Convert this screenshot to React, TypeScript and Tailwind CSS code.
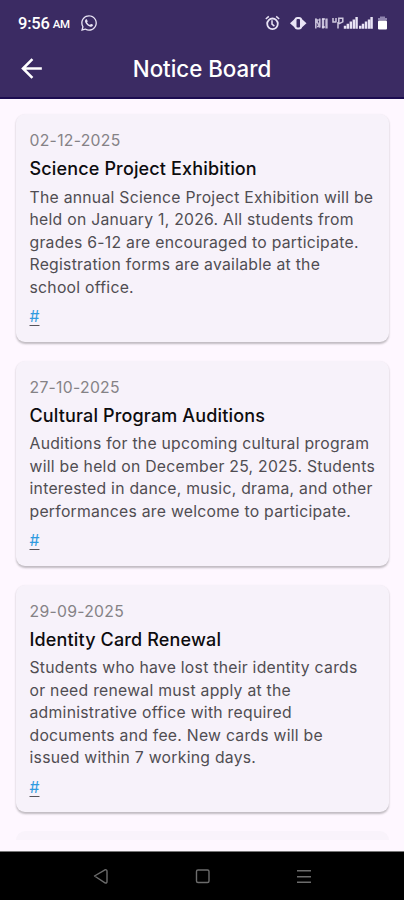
import { FaWhatsapp } from 'react-icons/fa';

interface Notice {
  date: string;
  title: string;
  lines: string[];
}

const NOTICES: Notice[] = [
  {
    date: '02-12-2025',
    title: 'Science Project Exhibition',
    lines: [
      'The annual Science Project Exhibition will be',
      'held on January 1, 2026. All students from',
      'grades 6-12 are encouraged to participate.',
      'Registration forms are available at the',
      'school office.',
    ],
  },
  {
    date: '27-10-2025',
    title: 'Cultural Program Auditions',
    lines: [
      'Auditions for the upcoming cultural program',
      'will be held on December 25, 2025. Students',
      'interested in dance, music, drama, and other',
      'performances are welcome to participate.',
    ],
  },
  {
    date: '29-09-2025',
    title: 'Identity Card Renewal',
    lines: [
      'Students who have lost their identity cards',
      'or need renewal must apply at the',
      'administrative office with required',
      'documents and fee. New cards will be',
      'issued within 7 working days.',
    ],
  },
];

function StatusIcons() {
  return (
    <svg width="126" height="20" viewBox="0 0 126 20" fill="none" stroke="#e9e4f5">
      {/* alarm */}
      <circle cx="8.5" cy="10.8" r="5.3" strokeWidth="1.8" />
      <path d="M8 7.3v3.8l2.4 2M1.8 6l3-2.6M15.2 6l-3-2.6" strokeWidth="1.5" />
      {/* vibrate */}
      <path d="M26 10.3l5.5-5v10zM42.5 10.3l-5.5-5v10z" fill="#e9e4f5" stroke="none" />
      <rect x="31.5" y="5" width="5.5" height="10.5" rx="2" strokeWidth="2" />
      {/* VoLTE */}
      <path d="M51.8 15.5V5.5l4 9V5.5M51.8 7h3M53 13.5h3M58 6h3M58 14h3" strokeWidth="1.6" opacity=".8" />
      <path d="M59 5.5v10M62.5 5.5v10" strokeWidth="2.3" opacity=".8" />
      {/* network */}
      <path d="M69 5v4h3.5M72 5v4M74.8 5.3h4v3.5l-4 2zM74 9v6.5" strokeWidth="1.5" opacity=".85" />
      <path d="M81 15.8v-3M83.8 15.8v-5M86.8 15.8V8.5M89.8 15.8V6.5M92.6 15.8V4M96.2 15.8v-3M99 15.8v-5M102 15.8V8.5M105 15.8V6.5M107.6 15.8V4" strokeWidth="2.4" />
      {/* battery */}
      <path d="M114 7V5h2V3.5h5V5h2v2z" fill="#8f84ae" stroke="none" />
      <rect x="114" y="7.5" width="9" height="9" rx="1" fill="#fff" stroke="none" />
    </svg>
  );
}

function NoticeCard({ notice }: { notice: Notice }) {
  return (
    <article className="shrink-0 rounded-[9px] bg-[#f7f2fa] px-3.5 pt-[17px] pb-3.5 shadow-[0_1.5px_2px_rgba(0,0,0,0.2),0_2px_3px_rgba(0,0,0,0.06)]">
      <p className="h-5 text-[15.75px] leading-5 tracking-[0.28px] text-[#858286]">{notice.date}</p>
      <h2 className="mt-1.5 h-6 text-[18px] leading-6 font-medium tracking-[0.15px] whitespace-nowrap text-[#0d0c0e]">{notice.title}</h2>
      <div className="mt-[5.5px] text-[15.75px] leading-[22.5px] tracking-[0.26px] text-[#504d52]">
        {notice.lines.map(line => (
          <p key={line} className="whitespace-nowrap">{line}</p>
        ))}
      </div>
      <a className="mt-2 block h-[20.5px] w-[10px] text-[15.75px] leading-5 text-[#2f9be0] underline decoration-[#57545a] underline-offset-[3px]">#</a>
    </article>
  );
}

export default function App() {
  return (
    <div className="flex h-[900px] w-[404px] flex-col overflow-hidden bg-[#fef7ff] font-[Inter,sans-serif]">
      <header className="h-[99px] shrink-0 border-b-2 border-[#1c0c50] bg-[#3b2b63] text-white">
        <div className="flex h-[46px] items-center pl-[18px] pr-[14px]">
          <span className="pt-[2px] font-[Roboto,sans-serif] text-[16.5px] font-medium tracking-[-0.2px]">9:56</span>
          <span className="ml-[3px] pt-1 font-[Roboto,sans-serif] text-[11.5px] font-medium tracking-[-0.2px]">AM</span>
          <FaWhatsapp size={18} className="ml-2.5 text-[#e9e4f5]" />
          <div className="ml-auto">
            <StatusIcons />
          </div>
        </div>
        <div className="grid h-[45px] grid-cols-[48px_1fr_48px] items-center">
          <svg width="31" height="31" viewBox="0 0 24 24" className="ml-4" fill="currentColor">
            <path d="M20 11H7.83l5.59-5.59L12 4l-8 8 8 8 1.41-1.41L7.83 13H20v-2z" />
          </svg>
          <h1 className="text-center text-[22.3px] leading-7 font-[450]">Notice Board</h1>
        </div>
      </header>

      <main className="flex min-h-0 flex-1 flex-col gap-[19px] overflow-hidden px-[15.5px] pt-[15px]">
        {NOTICES.map(notice => (
          <NoticeCard key={notice.date} notice={notice} />
        ))}
        {/* top edge of the next card */}
        <div className="h-[9px] shrink-0 rounded-t-[9px] bg-[#f9f3fb]" />
      </main>

      <nav className="h-[49px] shrink-0 border-t border-[#777] bg-black">
        <svg viewBox="0 0 404 48" className="h-12 w-[404px]" fill="none" stroke="#6c6c6c" strokeWidth="1.4" strokeLinejoin="round">
          <path d="M94.5 24L105 17.8Q107 17.5 107 19.5V29.5Q107 31.5 105 30.8Z" />
          <rect x="196.5" y="18" width="12.5" height="12.5" rx="1.5" />
          <path d="M297 18.7h14M297 24.7h14M297 30.3h14" />
        </svg>
      </nav>
    </div>
  );
}
